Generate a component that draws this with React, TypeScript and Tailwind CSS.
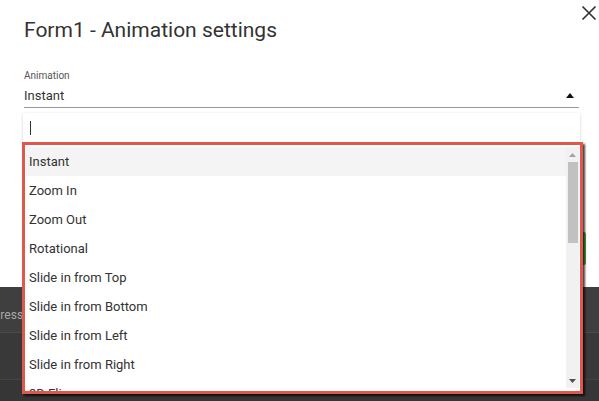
import React from "react";

const items = [
  "Instant",
  "Zoom In",
  "Zoom Out",
  "Rotational",
  "Slide in from Top",
  "Slide in from Bottom",
  "Slide in from Left",
  "Slide in from Right",
  "3D Flip",
  "Fade In",
];

export default function App() {
  return (
    <div
      className="relative w-[599px] h-[401px] overflow-hidden bg-white"
      style={{ fontFamily: "Roboto, 'Liberation Sans', sans-serif" }}
    >
      {/* Top white dialog area */}
      <div className="h-[287px] flex flex-col bg-white">
        <div className="flex items-start justify-between">
          <h1 className="ml-[24px] mt-[16px] text-[21px] leading-[28px] text-[#333333] font-normal">
            Form1 - Animation settings
          </h1>
          <button className="mt-[5px] mr-[2px] w-[16px] h-[16px] flex items-center justify-center">
            <svg width="16" height="16" viewBox="0 0 16 16">
              <path d="M1.5 1.5 L14.5 14.5 M14.5 1.5 L1.5 14.5" stroke="#333" strokeWidth="1.7" fill="none" />
            </svg>
          </button>
        </div>
        <div className="ml-[24px] mr-[20px] mt-[26px] flex flex-col">
          <span className="text-[10px] leading-[12px] text-[#555555]">Animation</span>
          <div className="flex items-center justify-between h-[23px] border-b border-[#9a9a9a] mt-[3px]">
            <span className="text-[13px] text-[#333333] leading-[20px]">Instant</span>
            <svg width="8" height="5" viewBox="0 0 8 5" className="mr-[5px] mb-[2px]">
              <path d="M0 5 L4 0 L8 5 Z" fill="#111" />
            </svg>
          </div>
        </div>
        <div className="flex justify-end mt-[124px]">
          <div className="w-[60px] h-[33px] bg-[#4caf50] mr-[13px] rounded-[2px]" />
        </div>
      </div>

      {/* Dark background area */}
      <div className="h-[114px] flex flex-col bg-[#363636]">
        <div className="h-[46px] flex items-start pt-[21px] bg-[#3f3f3f] border-b border-[#4b4b4b]">
          <span className="ml-[-21px] text-[12px] leading-[14px] text-[#a8a8a8]">Address</span>
        </div>
        <div className="h-[47px] bg-[#393939] border-b border-[#444444]" />
        <div className="flex-1 bg-[#363636]" />
      </div>

      {/* Dropdown overlay: search box */}
      <div className="absolute left-[23px] top-[113px] w-[557px] h-[30px] bg-white shadow-[0_1px_3px_rgba(0,0,0,0.18)] flex items-center">
        <div className="ml-[7px] w-[1px] h-[14px] bg-[#333333]" />
      </div>

      {/* Dropdown list with red annotation border */}
      <div className="absolute left-[22px] top-[142px] w-[561px] h-[252px] border-[3px] border-[#e2574c] bg-white shadow-[2px_2px_2px_rgba(0,0,0,0.75)] flex">
        <div className="flex-1 overflow-hidden pt-[2px] pl-[1px]">
          {items.map((it, i) => (
            <div
              key={it}
              className={`h-[29px] flex items-center pl-[3px] text-[13px] text-[#333333] ${
                i === 0 ? "bg-[#f4f4f4]" : ""
              }`}
            >
              {it}
            </div>
          ))}
        </div>
        <div className="w-[13px] mt-[2px] mb-[3px] mr-[1px] bg-[#f1f1f1] flex flex-col items-center">
          <div className="h-[15px] flex items-center justify-center">
            <svg width="7" height="4" viewBox="0 0 7 4">
              <path d="M0 4 L3.5 0 L7 4 Z" fill="#a3a3a3" />
            </svg>
          </div>
          <div className="w-[10px] h-[81px] bg-[#c1c1c1]" />
          <div className="flex-1" />
          <div className="h-[14px] flex items-center justify-center">
            <svg width="7" height="4" viewBox="0 0 7 4">
              <path d="M0 0 L7 0 L3.5 4 Z" fill="#505050" />
            </svg>
          </div>
        </div>
      </div>
    </div>
  );
}
